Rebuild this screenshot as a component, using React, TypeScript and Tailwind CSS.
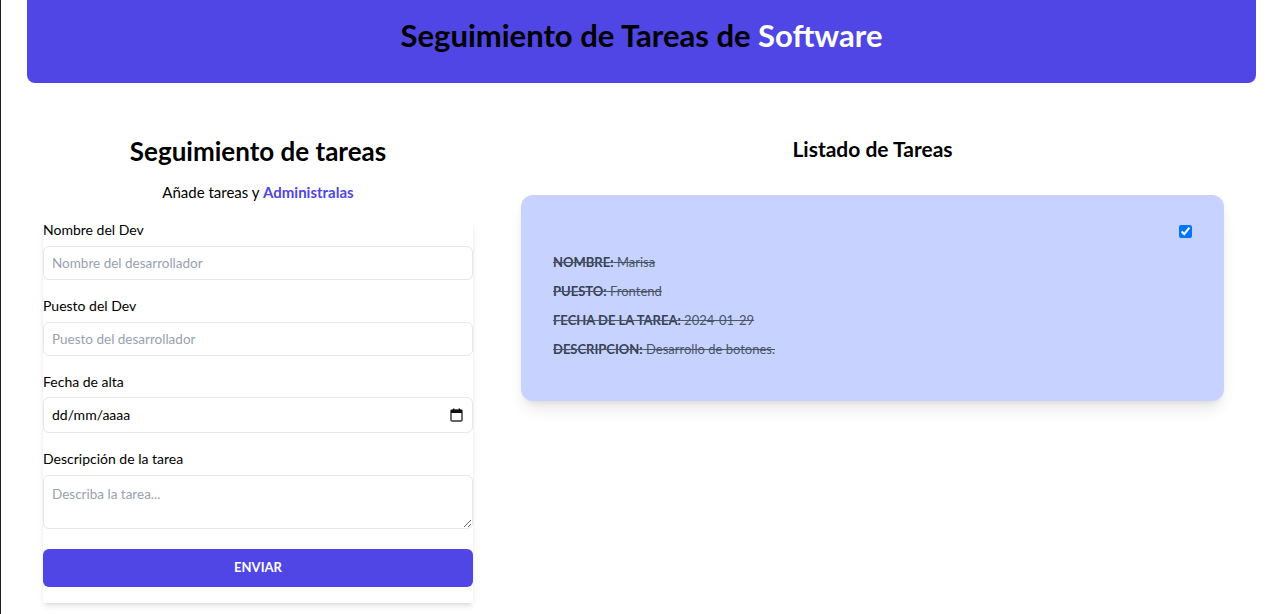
const TAREA = [
  { k: 'NOMBRE:', v: 'Marisa' },
  { k: 'PUESTO:', v: 'Frontend' },
  { k: 'FECHA DE LA TAREA:', v: '2024-01-29' },
  { k: 'DESCRIPCION:', v: 'Desarrollo de botones.' },
]

function CalendarIcon() {
  return (
    <svg className="w-[13px] h-[14px]" viewBox="0 0 13 14" fill="none">
      <rect x="1" y="2" width="11" height="11" rx="1" stroke="#333" strokeWidth="1.4" />
      <rect x="1" y="2" width="11" height="3" fill="#111" />
      <rect x="3" y="0.5" width="1.4" height="2.5" fill="#111" />
      <rect x="8.6" y="0.5" width="1.4" height="2.5" fill="#111" />
    </svg>
  )
}

export default function App() {
  return (
    <div className="min-h-screen border-l border-[#1c1c1c] bg-white text-black font-['Lato',sans-serif]">
      {/* Header */}
      <header className="ml-[26px] mr-[21px] h-[83px] rounded-b-lg bg-[#4f46e5] pt-[17px] text-center">
        <h1 className="text-[31px] font-bold leading-9">
          Seguimiento de Tareas de <span className="text-white">Software</span>
        </h1>
      </header>

      <main className="flex items-start gap-12 pl-[42px] pt-[52px]">
        {/* Formulario */}
        <div className="w-[430px]">
          <h2 className="text-center text-[26px] font-bold leading-8">Seguimiento de tareas</h2>
          <p className="mt-[13px] text-center text-[15px] leading-6">
            Añade tareas y <span className="font-bold text-[#4f46e5]">Administralas</span>
          </p>

          <form className="mt-4 bg-white pb-4 shadow-md">
            <div className="mb-4">
              <label className="mb-[6px] block text-sm leading-5">Nombre del Dev</label>
              <input
                type="text"
                placeholder="Nombre del desarrollador"
                className="block h-[34px] w-full rounded-md border border-gray-200 px-2 text-[13.5px] placeholder:text-gray-400 outline-none"
              />
            </div>
            <div className="mb-4">
              <label className="mb-[6px] block text-sm leading-5">Puesto del Dev</label>
              <input
                type="text"
                placeholder="Puesto del desarrollador"
                className="block h-[34px] w-full rounded-md border border-gray-200 px-2 text-[13.5px] placeholder:text-gray-400 outline-none"
              />
            </div>
            <div className="mb-4">
              <label className="mb-[5px] block text-sm leading-5">Fecha de alta</label>
              <div className="flex h-[36px] w-full items-center justify-between rounded-md border border-gray-200 pl-2 pr-[9px] text-sm">
                <span>dd/mm/aaaa</span>
                <CalendarIcon />
              </div>
            </div>
            <div className="mb-5">
              <label className="mb-[6px] block text-sm leading-5">Descripción de la tarea</label>
              <textarea
                placeholder="Describa la tarea..."
                className="block h-[54px] w-full rounded-md border border-gray-200 px-2 py-2 text-[13.5px] placeholder:text-gray-400 outline-none"
              />
            </div>
            <button
              type="button"
              className="h-[38px] w-full rounded-md bg-[#4f46e5] text-[13px] font-bold text-white"
            >
              ENVIAR
            </button>
          </form>
        </div>

        {/* Listado */}
        <div className="w-[703px]">
          <h2 className="text-center text-[21px] font-bold leading-7">Listado de Tareas</h2>
          <div className="mt-8 rounded-xl bg-[#c7d2fe] pt-[26px] pb-[42px] pl-8 pr-8 shadow-lg">
            <div className="flex h-5 items-center justify-end">
              <input type="checkbox" checked readOnly />
            </div>
            <div className="mt-[11px] flex flex-col gap-[9px]">
              {TAREA.map((t) => (
                <p key={t.k} className="text-[13px] leading-5 text-gray-600 line-through">
                  <span className="font-bold text-gray-700">{t.k}</span> {t.v}
                </p>
              ))}
            </div>
          </div>
        </div>
      </main>
    </div>
  )
}
